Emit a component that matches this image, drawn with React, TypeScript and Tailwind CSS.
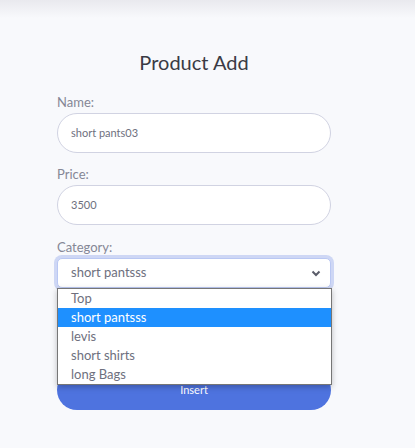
import React, { FC } from "react";

const categories = ["Top", "short pantsss", "levis", "short shirts", "long Bags"];

interface FieldProps {
  label: string;
  value: string;
  top: string;
}

const Field: FC<FieldProps> = ({ label, value, top }: FieldProps) => {
  return (
    <div className={top}>
      <div className="text-[13px] leading-[16px] text-[#858796]">{label}</div>
      <div className="mt-[3px] h-[40px] rounded-full border border-[#d1d3e2] bg-white pl-[13px] flex items-center text-[11px] text-[#6e707e]">
        {value}
      </div>
    </div>
  );
};

const App: FC = () => {
  const selected = "short pantsss";
  return (
    <div
      className="min-h-screen w-full bg-[#f8f9fc] relative"
      style={{ fontFamily: "Lato, 'Noto Sans', sans-serif" }}
    >
      <div className="absolute top-0 left-0 right-0 h-[18px] bg-gradient-to-b from-[#e9e9ee] to-[#f8f9fc]"></div>
      <div className="relative ml-[57px] w-[274px] pt-[50px]">
        <h1 className="text-center text-[20px] leading-[24px] text-[#3a3b45]">Product Add</h1>

        <Field label="Name:" value="short pants03" top="mt-[20px]" />
        <Field label="Price:" value="3500" top="mt-[13px]" />

        <div className="mt-[14px]">
          <div className="text-[13px] leading-[16px] text-[#858796]">Category:</div>
          <div className="relative mt-[3px]">
            <div className="h-[30px] rounded-[5px] border border-[#bac8f3] bg-white shadow-[0_0_0_3px_rgba(78,115,223,0.25)] pl-[13px] pr-[9px] flex items-center justify-between text-[13px] text-[#6e707e]">
              <span>{selected}</span>
              <svg width="10" height="7" viewBox="0 0 10 7">
                <path d="M1.5 1.5 L5 5 L8.5 1.5" fill="none" stroke="#5a5c69" strokeWidth="2" />
              </svg>
            </div>
            <div className="absolute left-0 top-full z-10 w-[275px] border border-[#767676] bg-white shadow-[0_2px_6px_rgba(0,0,0,0.25)]">
              {categories.map((c) => (
                <div
                  key={c}
                  className={
                    c === selected
                      ? "h-[19px] pl-[13px] flex items-center text-[13px] bg-[#1e90ff] text-white"
                      : "h-[19px] pl-[13px] flex items-center text-[13px] text-[#6e707e]"
                  }
                >
                  {c}
                </div>
              ))}
            </div>
          </div>
        </div>

        <button className="mt-[82px] w-full h-[40px] rounded-full bg-[#4e73df] text-white text-[11px]">
          Insert
        </button>
      </div>
    </div>
  );
};

export default App;
